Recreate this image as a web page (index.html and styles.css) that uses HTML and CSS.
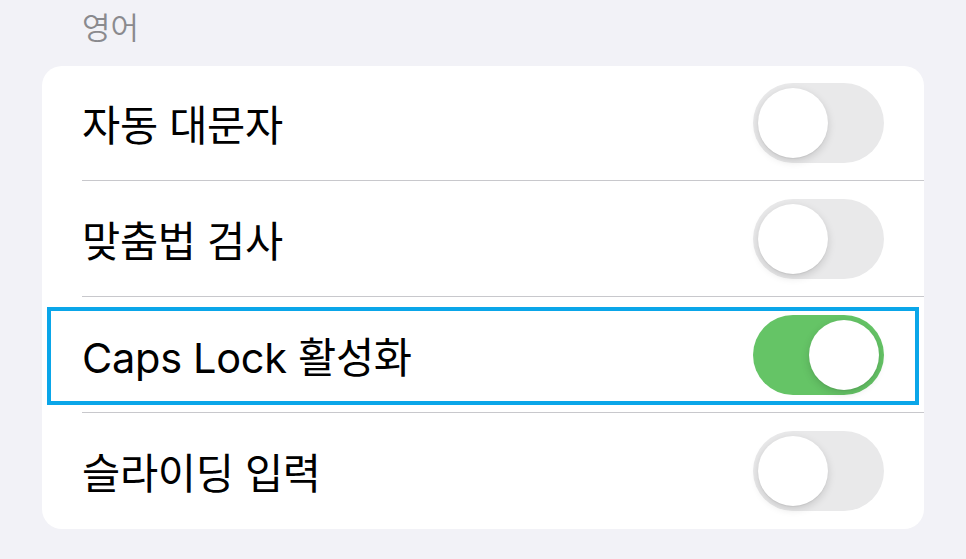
FILE: index.html
```html
<!DOCTYPE html>
<html lang="ko">
<head>
<meta charset="utf-8">
<link rel="stylesheet" href="styles.css">
</head>
<body>
<div class="page">
  <div class="section-header">영어</div>
  <div class="card">
    <div class="row">
      <span class="label">자동 대문자</span>
      <span class="toggle"><span class="knob"></span></span>
    </div>
    <div class="row">
      <span class="label">맞춤법 검사</span>
      <span class="toggle"><span class="knob"></span></span>
    </div>
    <div class="row highlighted">
      <span class="label">Caps Lock 활성화</span>
      <span class="toggle on"><span class="knob"></span></span>
      <span class="focus-box"></span>
    </div>
    <div class="row last">
      <span class="label">슬라이딩 입력</span>
      <span class="toggle"><span class="knob"></span></span>
    </div>
  </div>
</div>
</body>
</html>
```
FILE: styles.css
```css
html, body {
  margin: 0;
  padding: 0;
  background: #f2f2f7;
}
body {
  font-family: "Inter", "Noto Sans CJK KR", sans-serif;
  width: 966px;
  height: 559px;
  overflow: hidden;
}
.page {
  padding: 0 42px;
}
.section-header {
  height: 66px;
  box-sizing: border-box;
  padding: 6px 0 0 40px;
  font-size: 31px;
  line-height: 44px;
  color: #8a8a8e;
  font-weight: 350;
}
.card {
  background: #fff;
  border-radius: 20px;
  width: 882px;
}
.row {
  position: relative;
  height: 116px;
  display: flex;
  align-items: center;
  justify-content: space-between;
  margin-left: 40px;
  padding-right: 40px;
  border-bottom: 1px solid #c8c8cc;
  box-sizing: border-box;
}
.row:first-child {
  height: 115px;
}
.row.last {
  border-bottom: none;
}
.label {
  font-size: 41.5px;
  color: #000;
  letter-spacing: -0.3px;
  font-weight: 400;
}
.toggle {
  position: relative;
  width: 131px;
  height: 80px;
  border-radius: 40px;
  background: #e9e9ea;
  flex: none;
}
.toggle .knob {
  position: absolute;
  top: 5px;
  left: 5px;
  width: 70px;
  height: 70px;
  border-radius: 50%;
  background: #fff;
  box-shadow: 0 3px 8px rgba(0,0,0,0.15), 0 1px 1px rgba(0,0,0,0.06);
}
.toggle.on {
  background: #65c466;
}
.toggle.on .knob {
  left: 56px;
}
.focus-box {
  position: absolute;
  left: -35px;
  right: 5px;
  top: 10px;
  bottom: 7px;
  border: 4px solid #0aa6e9;
  pointer-events: none;
}
```
